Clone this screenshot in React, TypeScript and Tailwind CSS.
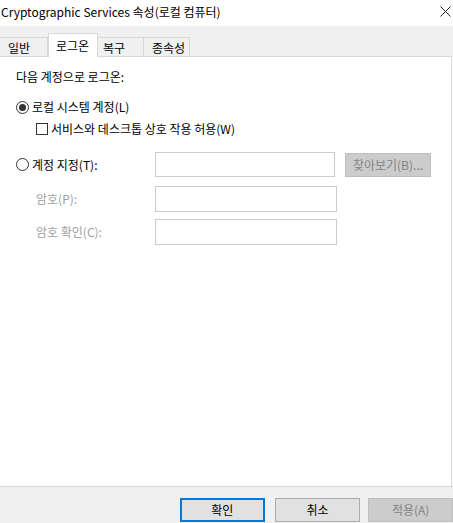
import React from 'react';

const font = { fontFamily: '"Noto Sans CJK KR", "Noto Sans", sans-serif' };

const tabs = [
  { label: '일반', w: 'w-[48px]', pl: 'pl-[8px]' },
  { label: '로그온', w: 'w-[50px]', pl: 'pl-[7px]', active: true },
  { label: '복구', w: 'w-[46px]', pl: 'pl-[5px]' },
  { label: '종속성', w: 'w-[46px]', pl: 'pl-[8px]' },
];

const Radio = ({ checked }: { checked?: boolean }) => (
  <span className="w-[13px] h-[13px] rounded-full border border-[#333] bg-white flex items-center justify-center shrink-0">
    {checked && <span className="w-[7px] h-[7px] rounded-full bg-[#333]" />}
  </span>
);

export default function App() {
  return (
    <div className="w-[453px] h-[523px] bg-white flex flex-col text-[12px] text-black overflow-hidden" style={font}>
      {/* title */}
      <div className="h-[26px] flex items-center justify-between pl-[1px] pr-[2px]">
        <span className="leading-none -mt-[3px]">Cryptographic Services 속성(로컬 컴퓨터)</span>
        <svg width="11" height="11" viewBox="0 0 11 11" className="-mt-[4px]">
          <path d="M0.5 0.5 L10.5 10.5 M10.5 0.5 L0.5 10.5" stroke="#222" strokeWidth="1" />
        </svg>
      </div>

      {/* tabs */}
      <div className="h-[30px] bg-[#f0f0f0] flex items-end">
        {tabs.map(t =>
          t.active ? (
            <div key={t.label} className={`${t.w} ${t.pl} h-[24px] -mb-px relative bg-white border border-b-0 border-[#d9d9d9] flex items-center leading-none`}>
              {t.label}
            </div>
          ) : (
            <div key={t.label} className={`${t.w} ${t.pl} h-[19px] border-t border-r border-[#d9d9d9] flex items-center leading-none pt-[1px]`}>
              {t.label}
            </div>
          )
        )}
      </div>

      {/* content */}
      <div className="flex-1 bg-white border-t border-r border-[#d9d9d9] mr-[1px] pl-[16px] flex flex-col">
        <div className="mt-[12px] h-[16px] flex items-center">다음 계정으로 로그온:</div>

        <div className="mt-[14px] h-[16px] flex items-center gap-[3px]">
          <Radio checked />
          <span>로컬 시스템 계정(L)</span>
        </div>

        <div className="mt-[6px] h-[16px] flex items-center gap-[3px] pl-[20px]">
          <span className="w-[12px] h-[12px] border border-[#333] bg-white shrink-0" />
          <span>서비스와 데스크톱 상호 작용 허용(W)</span>
        </div>

        <div className="mt-[15px] h-[25px] flex items-center">
          <div className="w-[139px] flex items-center gap-[3px]">
            <Radio />
            <span>계정 지정(T):</span>
          </div>
          <div className="w-[180px] h-[25px] border border-[#cccccc] bg-white" />
          <div className="ml-[10px] w-[86px] h-[24px] bg-[#cccccc] border border-[#bfbfbf] text-[#838383] flex items-center justify-center">
            찾아보기(B)...
          </div>
        </div>

        <div className="mt-[9px] h-[26px] flex items-center">
          <span className="w-[139px] pl-[20px] text-[#a0a0a0]">암호(P):</span>
          <div className="w-[182px] h-[26px] border border-[#cccccc] bg-white" />
        </div>

        <div className="mt-[7px] h-[26px] flex items-center">
          <span className="w-[139px] pl-[20px] text-[#a0a0a0]">암호 확인(C):</span>
          <div className="w-[182px] h-[26px] border border-[#cccccc] bg-white" />
        </div>
      </div>

      {/* footer */}
      <div className="h-[37px] bg-[#f0f0f0] border-t border-[#d6d6d6] flex items-start pt-[11px]">
        <div className="ml-[180px] w-[85px] h-[24px] border-2 border-[#0078d7] bg-[#e1e1e1] flex items-center justify-center">확인</div>
        <div className="ml-[10px] w-[86px] h-[24px] border border-[#adadad] bg-[#e1e1e1] flex items-center justify-center">취소</div>
        <div className="ml-[8px] w-[85px] h-[24px] border border-[#bfbfbf] bg-[#cccccc] text-[#838383] flex items-center justify-center">적용(A)</div>
      </div>
    </div>
  );
}
